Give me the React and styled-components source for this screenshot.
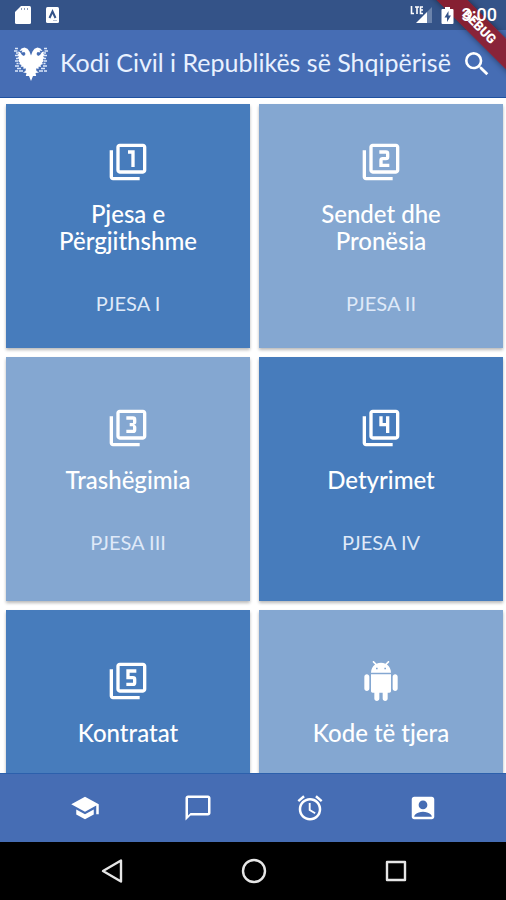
import React from 'react';
import styled, { createGlobalStyle } from 'styled-components';
import {
  MdFilter1, MdFilter2, MdFilter3, MdFilter4, MdFilter5,
  MdSearch, MdSchool, MdChatBubbleOutline, MdAlarm, MdAccountBox,
} from 'react-icons/md';

const GlobalStyle = createGlobalStyle`
  *, *::before, *::after { box-sizing: border-box; }
  body { margin: 0; background: #fff; font-family: Lato, "Open Sans", sans-serif; color: #fff; }
  button { border: 0; padding: 0; background: none; color: inherit; font: inherit; cursor: pointer; }
  svg { display: block; }
`;

const Screen = styled.div`
  position: relative;
  display: flex;
  flex-direction: column;
  height: 100vh;
  overflow: hidden;
`;

const StatusBar = styled.div`
  flex: none;
  display: flex;
  align-items: center;
  justify-content: space-between;
  height: 30px;
  padding: 0 9px 0 14px;
  background: #345388;
`;

const StatusGroup = styled.div`
  position: relative;
  z-index: 2;
  display: flex;
  align-items: center;
  gap: ${({ $gap }) => $gap}px;
`;

const Clock = styled.span`
  font: 500 18px/22px Roboto, sans-serif;
`;

const AppBar = styled.header`
  flex: none;
  display: flex;
  align-items: center;
  height: 68px;
  padding: 0 13px 0 12px;
  background: #466db4;
  border-bottom: 1px solid #1f51a0;
`;

const Title = styled.h1`
  flex: 1;
  min-width: 0;
  margin: 0 0 4px 10px;
  font-size: 25px;
  line-height: 30px;
  font-weight: 400;
  white-space: nowrap;
  color: #e9f1ff;
`;

const SearchButton = styled.button`
  flex: none;
  font-size: 32px;
`;

const Content = styled.main`
  flex: 1;
  min-height: 0;
  overflow: hidden;
`;

const CardGrid = styled.div`
  display: grid;
  grid-template-columns: 1fr 1fr;
  gap: 9px;
  padding: 6px 3px 6px 6px;
`;

const Card = styled.button`
  display: flex;
  flex-direction: column;
  align-items: center;
  justify-content: center;
  aspect-ratio: 1;
  && { padding: 4px 24px 0; background: ${({ $light }) => ($light ? '#84a7d1' : '#477cbc')}; }
  box-shadow: 0 2px 3px rgba(0, 0, 0, 0.28);
`;

const CardIcon = styled.span`
  font-size: 40px;
`;

const CardTitle = styled.span`
  margin-top: 18px;
  font-size: 24px;
  line-height: 27px;
  font-weight: 500;
  white-space: pre-line;
`;

const CardPart = styled.span`
  min-height: 24px;
  margin-top: 37px;
  font-size: 20px;
  line-height: 24px;
  font-weight: 400;
  color: #dfe9f8;
`;

const TabBar = styled.nav`
  flex: none;
  display: grid;
  grid-template-columns: repeat(4, 1fr);
  height: 69px;
  padding: 0 27px 0 29px;
  background: #466db4;
  border-top: 1px solid #2c60ac;
`;

const SystemBar = styled.div`
  flex: none;
  display: grid;
  grid-template-columns: repeat(3, 1fr);
  height: 58px;
  padding: 0 39px 0 41px;
  background: #000;
`;

const BarButton = styled.button`
  display: flex;
  align-items: center;
  justify-content: center;
  font-size: 30px;
`;

const RibbonCorner = styled.div`
  position: absolute;
  z-index: 1;
  top: 0;
  right: 0;
  width: 80px;
  height: 80px;
  overflow: hidden;
  pointer-events: none;
`;

const Ribbon = styled.div`
  position: absolute;
  top: 16px;
  right: -33px;
  width: 120px;
  height: 22px;
  transform: rotate(45deg);
  background: rgba(148, 24, 36, 0.86);
  box-shadow: 0 0 6px rgba(0, 0, 0, 0.45);
  font: 900 13px/22px Roboto, sans-serif;
  text-align: center;
`;

const SdCardIcon = () => (
  <svg width="18" height="20" viewBox="0 0 18 20" aria-hidden="true">
    <path d="M7 1h8.500q1.500 0 1.500 1.500v15q0 1.500-1.500 1.500h-13q-1.500 0-1.500-1.500V7z" fill="#fff" />
    <path d="M7.500 3v2M10.500 3v2M13.500 3v2" stroke="#8c9cba" strokeWidth="1" />
  </svg>
);

const AdbBadge = () => (
  <svg width="15" height="18" viewBox="0 0 15 18" aria-hidden="true">
    <rect x="1" y="1" width="13" height="16" rx="1.500" fill="#fff" />
    <path d="M4.500 12 7.500 5.500 10.500 12" fill="none" stroke="#345388" strokeWidth="2" />
    <path d="M8 14.500h4" stroke="#b4c0d4" />
  </svg>
);

const SignalIcon = () => (
  <svg width="23" height="20" viewBox="0 0 23 20" aria-hidden="true">
    <path d="M22 2v16h-5V7z" fill="#6b83ab" />
    <path d="M6 18 17 7v11z" fill="#fff" />
    <path d="M1.500 1v7.500H4M5 2h4M7 2v7M13 2h-2.500v6.500H13M10.500 5H13" fill="none" stroke="#fff" strokeWidth="1.600" />
  </svg>
);

const BatteryIcon = () => (
  <svg width="13" height="19" viewBox="0 0 13 19" aria-hidden="true">
    <path d="M4 1h5v2h2.500q1 0 1 1v13q0 1-1 1h-10q-1 0-1-1V4q0-1 1-1H4z" fill="#fff" />
    <path d="M7.500 5 3.500 11.500h2.500V16l4-6.500H7.500z" fill="#345388" />
  </svg>
);

const EAGLE_HALF =
  'M18 10.500 16.500 6.500 14.500 3.800 11.500 2.500 8.500 3.500 6.500 6 9.500 5.500 8.500 7.500 11.500 7 12.500 9 11 11 9 10 7 7 5 6.500 ' +
  '5.500 9 4.500 9.500 5.800 12 4.500 12.500 6.200 15 5 15.800 7 17.800 6 19 8.500 20 7.800 21.800 10.500 21.800 10.300 23.800 ' +
  '13 23.500 12.500 26 10 27.500 13.500 28 12.800 31 16 31 18 36z';

const EAGLE_FEATHERS =
  'M2 3.500h3M1 6h3.500M3 8h2M2 10.500h3M3 13.500h2M2 16h3M3.500 18.500h2M2 21h4M4 23.500h4M2 26h3M6 26h4';

const EagleHalf = () => (
  <>
    <path d={EAGLE_HALF} fill="#fff" />
    <path d={EAGLE_FEATHERS} stroke="#dce8fa" strokeWidth="1.500" />
  </>
);

const EagleLogo = () => (
  <svg width="38" height="38" viewBox="0 0 36 38" role="img" aria-label="Shqiponja">
    <EagleHalf />
    <g transform="matrix(-1 0 0 1 36 0)"><EagleHalf /></g>
  </svg>
);

const AndroidRobot = () => (
  <svg width="1em" height="1em" viewBox="0 0 24 24" fill="currentColor" aria-hidden="true">
    <path d="M6 18c0 .55.45 1 1 1h1v3.500c0 .83.67 1.500 1.500 1.500s1.500-.67 1.500-1.500V19h2v3.500c0 .83.67 1.500 1.500 1.500s1.500-.67 1.500-1.500V19h1c.55 0 1-.45 1-1V8H6v10zM3.500 8C2.670 8 2 8.670 2 9.500v7c0 .83.67 1.500 1.500 1.500S5 17.330 5 16.500v-7C5 8.670 4.330 8 3.500 8zm17 0c-.83 0-1.500.67-1.500 1.500v7c0 .83.67 1.500 1.500 1.500s1.500-.67 1.500-1.500v-7c0-.83-.67-1.500-1.500-1.500zm-4.970-5.840l1.300-1.300c.2-.2.2-.51 0-.71-.2-.2-.51-.2-.71 0l-1.480 1.480C13.850 1.230 12.950 1 12 1c-.96 0-1.860.23-2.660.63L7.850.15c-.2-.2-.51-.2-.71 0-.2.2-.2.51 0 .71l1.310 1.310C6.970 3.260 6 5.010 6 7h12c0-1.990-.97-3.750-2.470-4.840zM10 5H9V4h1v1zm5 0h-1V4h1v1z" />
  </svg>
);

const SystemIcon = ({ d }) => (
  <svg width="28" height="28" viewBox="0 0 28 28" fill="none" stroke="#e6e6e6" strokeWidth="2.400" strokeLinejoin="round" aria-hidden="true">
    <path d={d} />
  </svg>
);

const parts = [
  { icon: MdFilter1, title: 'Pjesa e\nPërgjithshme', part: 'PJESA I' },
  { icon: MdFilter2, title: 'Sendet dhe\nPronësia', part: 'PJESA II', light: true },
  { icon: MdFilter3, title: 'Trashëgimia', part: 'PJESA III', light: true },
  { icon: MdFilter4, title: 'Detyrimet', part: 'PJESA IV' },
  { icon: MdFilter5, title: 'Kontratat' },
  { icon: AndroidRobot, title: 'Kode të tjera', light: true },
];

const tabs = [
  { icon: MdSchool, label: 'Kodi' },
  { icon: MdChatBubbleOutline, label: 'Mesazhe' },
  { icon: MdAlarm, label: 'Alarmi' },
  { icon: MdAccountBox, label: 'Profili' },
];

const systemButtons = [
  { label: 'Back', d: 'M5 14 23 3.500v21z' },
  { label: 'Home', d: 'M25 14a11 11 0 1 1-22 0 11 11 0 0 1 22 0z' },
  { label: 'Overview', d: 'M5 5h18v18H5z' },
];

export default function App() {
  return (
    <>
      <GlobalStyle />
      <Screen>
        <StatusBar>
          <StatusGroup $gap={13}>
            <SdCardIcon />
            <AdbBadge />
          </StatusGroup>
          <StatusGroup $gap={8}>
            <SignalIcon />
            <BatteryIcon />
            <Clock>3:00</Clock>
          </StatusGroup>
        </StatusBar>
        <AppBar>
          <EagleLogo />
          <Title>Kodi Civil i Republikës së Shqipërisë</Title>
          <SearchButton type="button" aria-label="Kërko"><MdSearch /></SearchButton>
        </AppBar>
        <Content>
          <CardGrid>
            {parts.map(({ icon: Icon, title, part, light }) => (
              <Card key={title} type="button" $light={light}>
                <CardIcon><Icon /></CardIcon>
                <CardTitle>{title}</CardTitle>
                <CardPart>{part}</CardPart>
              </Card>
            ))}
          </CardGrid>
        </Content>
        <TabBar>
          {tabs.map(({ icon: Icon, label }) => (
            <BarButton key={label} type="button" aria-label={label}><Icon /></BarButton>
          ))}
        </TabBar>
        <SystemBar>
          {systemButtons.map(({ label, d }) => (
            <BarButton key={label} type="button" aria-label={label}><SystemIcon d={d} /></BarButton>
          ))}
        </SystemBar>
        <RibbonCorner><Ribbon>DEBUG</Ribbon></RibbonCorner>
      </Screen>
    </>
  );
}
